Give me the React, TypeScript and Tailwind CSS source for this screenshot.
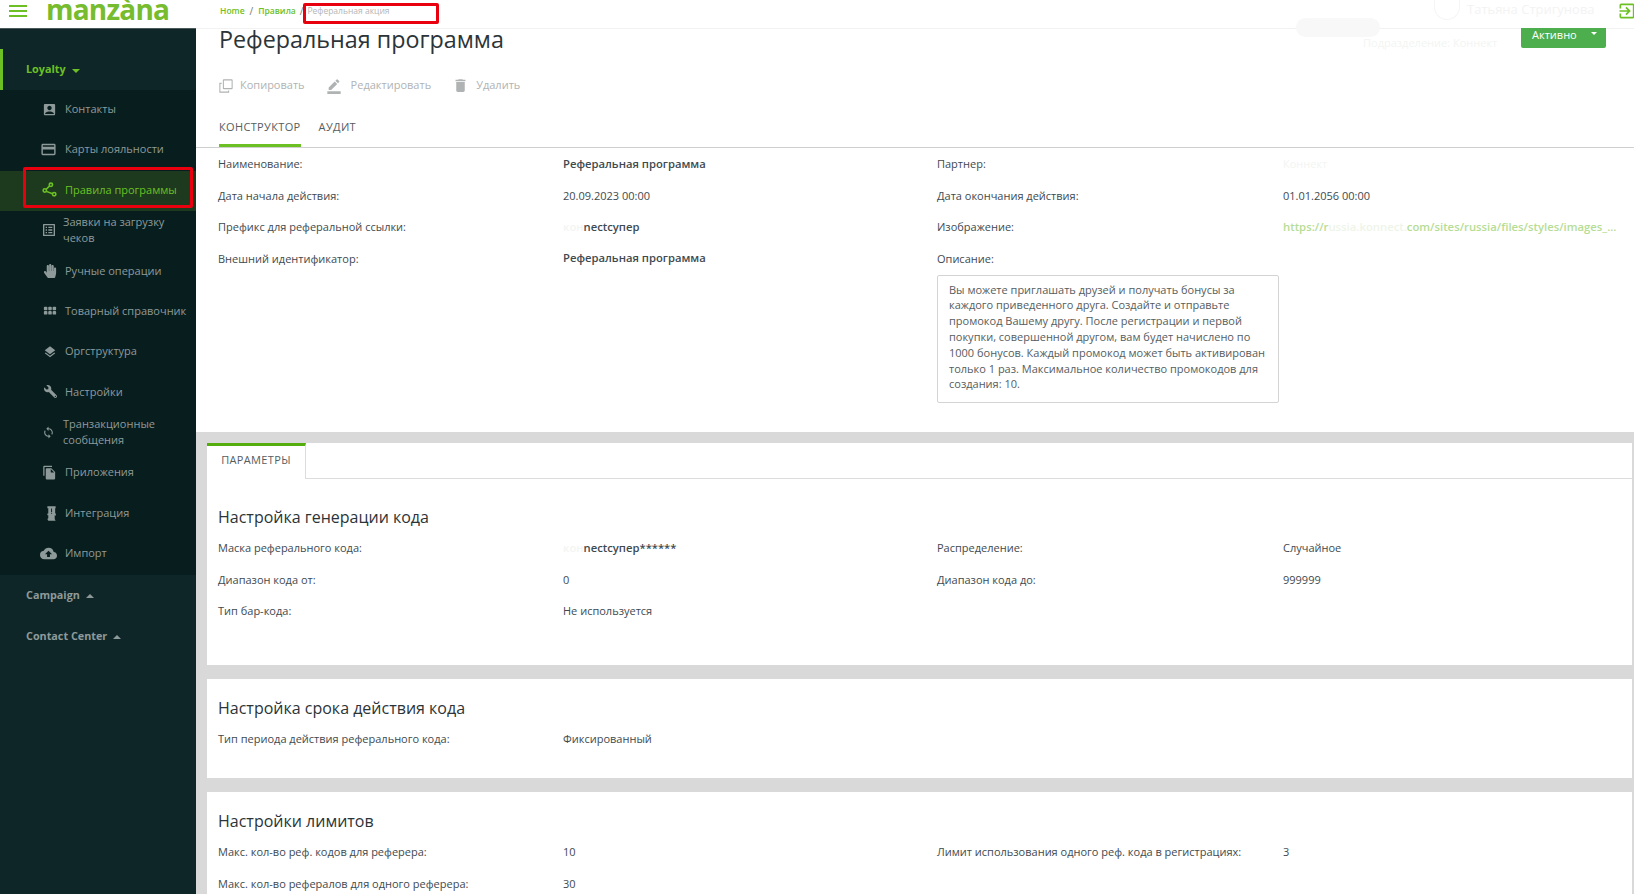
import type { ReactNode } from 'react'
import {
  MdAccountBox,
  MdBorderColor,
  MdCloudUpload,
  MdCreditCard,
  MdDelete,
  MdExitToApp,
  MdFileCopy,
  MdLayers,
  MdListAlt,
  MdSync,
} from 'react-icons/md'
import { FaHandPaper, FaWrench } from 'react-icons/fa'
import { BsGrid3X2GapFill } from 'react-icons/bs'

function RulesIcon() {
  return (
    <svg viewBox="0 0 16 16" className="w-[15px] h-[15px]" fill="none" stroke="currentColor" strokeWidth="1.7">
      <circle cx="3" cy="9" r="1.8" />
      <circle cx="9.5" cy="3" r="1.8" />
      <circle cx="13" cy="13" r="1.8" />
      <path d="M4.5 7.7 8.2 4.2M4.6 10 11.3 12.5" />
    </svg>
  )
}

function IntegrationIcon() {
  return (
    <svg viewBox="0 0 12 16" className="w-[11px] h-[15px]" fill="currentColor">
      <path d="M1.5 0h9v2.2H10V8h.8v2.2H9.5V14l1 2H2.5l-1-2 1-.8V10H1.5V8h1V2.2h-1z" />
      <path d="M5.6 2.5h1v4h-1zM5.6 7.4h1v1h-1z" fill="#081e1e" />
    </svg>
  )
}

function CopyIcon() {
  return (
    <svg viewBox="0 0 16 16" className="w-[14px] h-[14px]" fill="none" stroke="currentColor" strokeWidth="1.2">
      <rect x="5" y="1" width="10" height="10" rx="0.5" />
      <path d="M3 5H1v10h10v-2" />
    </svg>
  )
}

const loyaltyItems: { label: ReactNode; icon: ReactNode; active?: boolean; twoLine?: boolean }[] = [
  { label: 'Контакты', icon: <MdAccountBox size={15} /> },
  { label: 'Карты лояльности', icon: <MdCreditCard size={17} /> },
  { label: 'Правила программы', icon: <RulesIcon />, active: true },
  { label: <>Заявки на загрузку<br />чеков</>, icon: <MdListAlt size={16} />, twoLine: true },
  { label: 'Ручные операции', icon: <FaHandPaper size={14} /> },
  { label: 'Товарный справочник', icon: <BsGrid3X2GapFill size={14} /> },
  { label: 'Оргструктура', icon: <MdLayers size={14} /> },
  { label: 'Настройки', icon: <FaWrench size={13} className="-scale-x-100" /> },
  { label: <>Транзакционные<br />сообщения</>, icon: <MdSync size={13} className="-translate-x-[2px]" />, twoLine: true },
  { label: 'Приложения', icon: <MdFileCopy size={15} /> },
  { label: 'Интеграция', icon: <IntegrationIcon /> },
  { label: 'Импорт', icon: <MdCloudUpload size={17} /> },
]

function Caret({ up = false }: { up?: boolean }) {
  return up ? (
    <span className="inline-block w-0 h-0 ml-[6px] mt-[2px] border-x-[4px] border-x-transparent border-b-[4px] border-b-current" />
  ) : (
    <span className="inline-block w-0 h-0 ml-[6px] mt-[2px] border-x-[4px] border-x-transparent border-t-[4px] border-t-current" />
  )
}

function Sidebar() {
  return (
    <aside className="relative w-[196px] shrink-0 flex flex-col bg-[#0e2628]">
      <div className="h-[29px] bg-white border-b border-[#4a5a5a] flex items-start overflow-hidden shrink-0">
        <div className="ml-[9px] mt-[5px] flex flex-col gap-[3px] w-[18px]">
          <span className="h-[2px] bg-[#6cc024]" />
          <span className="h-[2px] bg-[#6cc024]" />
          <span className="h-[2px] bg-[#6cc024]" />
        </div>
        <span className="ml-[19px] -mt-[8px] text-[28px] leading-[34px] font-bold text-[#76bc2e] font-['Open_Sans',sans-serif] tracking-[-0.8px]">
          manzàna
        </span>
      </div>
      <div className="h-[20px] shrink-0" />
      <div className="h-[41px] shrink-0 flex items-center pl-[23px] border-l-[3px] border-[#6cc024] text-[#6cc024] font-bold text-[10.8px]">
        Loyalty
        <Caret />
      </div>
      <nav className="bg-[#081e1e] flex flex-col">
        {loyaltyItems.map((item, i) => (
          <div
            key={i}
            className={`h-[40.4px] pb-[2px] flex items-center ${item.active ? 'bg-[#1d3a1f] text-[#6cc024]' : 'text-[#8e9a9a]'}`}
          >
            <span className="w-[65px] shrink-0 flex justify-end pr-[8px]">{item.icon}</span>
            <span className={item.twoLine ? 'leading-[16px] -ml-[2px]' : ''}>{item.label}</span>
          </div>
        ))}
      </nav>
      <div className="h-[41px] flex items-center pl-[26px] text-[#8e9a9a] font-bold text-[10.8px]">
        Campaign
        <Caret up />
      </div>
      <div className="h-[41px] flex items-center pl-[26px] text-[#8e9a9a] font-bold text-[10.8px]">
        Contact Center
        <Caret up />
      </div>
      <div className="absolute left-[23px] top-[167px] w-[170px] h-[41px] border-[3px] border-[#e8000f] rounded-[2px]" />
    </aside>
  )
}

function Row({ cells }: { cells: [string, ReactNode, string?, ReactNode?] }) {
  return (
    <div className="h-[31.4px] grid grid-cols-[345px_374px_346px_1fr] items-center text-[#3e4a50]">
      <div>{cells[0]}</div>
      <div>{cells[1]}</div>
      <div>{cells[2]}</div>
      <div className="truncate pr-[12px]">{cells[3]}</div>
    </div>
  )
}

function Panel({ title, rows, className }: { title: string; rows: [string, ReactNode, string?, ReactNode?][]; className: string }) {
  return (
    <section className={`bg-white px-[11px] ${className}`}>
      <h2 className="text-[16px] leading-[22px] text-[#2c3438]">{title}</h2>
      <div className="mt-[5px]">
        {rows.map((r, i) => (
          <Row key={i} cells={r} />
        ))}
      </div>
    </section>
  )
}

function Hint({ children }: { children: ReactNode }) {
  return <span className="text-[#f3f5f2]">{children}</span>
}

export default function App() {
  return (
    <div className="h-screen w-full overflow-hidden flex bg-white text-[11px] font-['Open_Sans',sans-serif]">
      <Sidebar />
      <main className="relative flex-1 min-w-0 flex flex-col">
        <div className="h-[29px] shrink-0 border-b border-[#f2f2f2] flex items-center pl-[24px] pb-[5px] text-[8.5px]">
          <span className="font-semibold text-[#6cc024]">Home</span>
          <span className="mx-[5px] text-[10px] text-[#777]">/</span>
          <span className="font-semibold text-[#6cc024]">Правила</span>
          <span className="mx-[4px] text-[10px] text-[#777]">/</span>
          <span className="text-[#b5b5b5]">Реферальная акция</span>
        </div>
        {/* red annotation over the breadcrumb */}
        <div className="absolute left-[107px] top-[3px] w-[136px] h-[21px] border-[3px] border-[#e8000f] rounded-[2px]" />

        {/* blurred-out user block in the header */}
        <div className="absolute left-[1238px] top-[0px] w-[26px] h-[20px] rounded-b-full border border-t-0 border-[#f5f5f5]" />
        <div className="absolute left-[1271px] top-[0px] text-[13px] text-[#f3f3f3] whitespace-nowrap">Татьяна Стригунова</div>
        <div className="absolute left-[1100px] top-[18px] w-[84px] h-[19px] rounded-full bg-[#f8f8f8]" />
        <div className="absolute left-[1167px] top-[35px] whitespace-nowrap"><Hint>Подразделение: Коннект</Hint></div>

        <button className="absolute right-[28px] top-[28px] w-[85px] h-[20px] bg-[#4cae4c] rounded-b-[2px] text-white flex items-start pl-[11px] leading-[14px]">
          Активно
          <span className="ml-[14px] mt-[4px] w-0 h-0 border-x-[3px] border-x-transparent border-t-[3px] border-t-white" />
        </button>
        <MdExitToApp size={20} className="absolute -right-[3px] top-[1px] text-[#6cc024]" />

        <div className="h-[93px] shrink-0 pl-[23px] -mt-[3px]">
          <h1 className="text-[23.3px] leading-[26px] text-[#2c3438]">Реферальная программа</h1>
          <div className="mt-[25px] flex items-center text-[#b0b3b3]">
            <CopyIcon />
            <span className="ml-[7px]">Копировать</span>
            <MdBorderColor size={16} className="ml-[21px]" />
            <span className="ml-[9px]">Редактировать</span>
            <MdDelete size={17} className="ml-[21px]" />
            <span className="ml-[7px]">Удалить</span>
          </div>
        </div>

        <div className="h-[29px] shrink-0 border-b border-[#cfcfcf] flex pl-[23px] text-[#555d60] tracking-[0.35px]">
          <div className="h-[28px] border-b-[3px] border-[#6cc024]">КОНСТРУКТОР</div>
          <div className="ml-[18px]">АУДИТ</div>
        </div>

        <div className="pl-[22px] pt-[1px] h-[284px] shrink-0">
          <Row cells={['Наименование:', <b className="font-semibold text-[11.25px]">Реферальная программа</b>, 'Партнер:', <Hint>Коннект</Hint>]} />
          <Row cells={['Дата начала действия:', '20.09.2023 00:00', 'Дата окончания действия:', '01.01.2056 00:00']} />
          <Row
            cells={[
              'Префикс для реферальной ссылки:',
              <b className="font-semibold text-[11.25px]"><span className="text-[#f3f5f2]">кон</span>nectсупер</b>,
              'Изображение:',
              <span className="font-semibold text-[11.3px] text-[#b6dd95]">
                https://r<span className="text-[#eef5e8]">ussia.konnect.</span>com/sites/russia/files/styles/images_...
              </span>,
            ]}
          />
          <Row cells={['Внешний идентификатор:', <b className="font-semibold text-[11.25px]">Реферальная программа</b>, 'Описание:', '']} />
          <div className="ml-[719px] w-[342px] h-[128px] border border-[#d4d4d4] rounded-[2px] px-[11px] py-[6px] leading-[15.8px] text-[#555d60]">
            Вы можете приглашать друзей и получать бонусы за каждого приведенного друга. Создайте и отправьте промокод Вашему другу. После регистрации и первой покупки, совершенной другом, вам будет начислено по 1000 бонусов. Каждый промокод может быть активирован только 1 раз. Максимальное количество промокодов для создания: 10.
          </div>
        </div>

        <div className="flex-1 bg-[#d9d9d9] pt-[11px] pl-[11px] pr-[2px] min-h-0 overflow-hidden">
          <div className="bg-white h-[36px] flex">
            <div className="w-[99px] h-[36px] border-t-[3px] border-[#54ad0c] border-r border-r-[#dcdcdc] flex justify-center pt-[6px] text-[#555d60] tracking-[0.35px]">
              ПАРАМЕТРЫ
            </div>
            <div className="flex-1 border-b border-[#dcdcdc]" />
          </div>
          <Panel
            className="pt-[27px] h-[186px]"
            title="Настройка генерации кода"
            rows={[
              ['Маска реферального кода:', <b className="font-semibold text-[11.25px]"><span className="text-[#f3f5f2]">кон</span>nectсупер******</b>, 'Распределение:', 'Случайное'],
              ['Диапазон кода от:', '0', 'Диапазон кода до:', '999999'],
              ['Тип бар-кода:', 'Не используется'],
            ]}
          />
          <Panel
            className="mt-[14px] pt-[18px] h-[99px]"
            title="Настройка срока действия кода"
            rows={[['Тип периода действия реферального кода:', 'Фиксированный']]}
          />
          <Panel
            className="mt-[14px] pt-[18px] h-[130px]"
            title="Настройки лимитов"
            rows={[
              ['Макс. кол-во реф. кодов для реферера:', '10', 'Лимит использования одного реф. кода в регистрациях:', '3'],
              ['Макс. кол-во рефералов для одного реферера:', '30'],
            ]}
          />
        </div>
      </main>
    </div>
  )
}
